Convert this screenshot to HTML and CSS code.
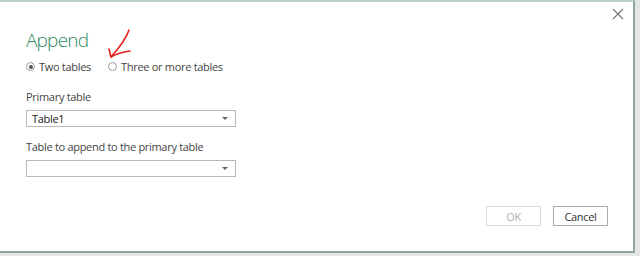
FILE: index.html
```html
<!DOCTYPE html>
<html>
    <head>
        <link rel="stylesheet" href="styles.css">
    </head>
    <body>
        <div class="dialog">
            <button type="button" class="close" aria-label="Close">
                <svg width="12" height="12" viewBox="0 0 12 12">
                    <path d="M1 1 L11 11 M11 1 L1 11" stroke="#777" stroke-width="1.1" fill="none"/>
                </svg>
            </button>

            <h1 class="title">Append</h1>

            <div class="choice">
                <label class="radio">
                    <span class="dot checked"></span>
                    Two tables
                </label>
                <label class="radio">
                    <span class="dot"></span>
                    Three or more tables
                </label>
            </div>

            <div class="field">
                <span class="label">Primary table</span>
                <div class="select">
                    <span>Table1</span>
                    <span class="caret"></span>
                </div>
            </div>

            <div class="field">
                <span class="label">Table to append to the primary table</span>
                <div class="select">
                    <span></span>
                    <span class="caret"></span>
                </div>
            </div>

            <div class="footer">
                <button type="button" class="btn" disabled>OK</button>
                <button type="button" class="btn">Cancel</button>
            </div>

            <!-- hand drawn annotation -->
            <svg class="mark" width="40" height="40" viewBox="0 0 40 40">
                <path d="M29 3 C26 12 19 21 11 30" stroke="#e8201c" stroke-width="1.6" fill="none" stroke-linecap="round"/>
                <path d="M9 22 C10 25 10 27 11 30 C16 27 22 25 30 24" stroke="#e8201c" stroke-width="1.6" fill="none" stroke-linecap="round" stroke-linejoin="round"/>
            </svg>
        </div>
    </body>
</html>
```

FILE: styles.css
```css
* {
    box-sizing: border-box;
}

body {
    margin: 0;
    width: 640px;
    height: 256px;
    background-color: #e4e6e5;
    font-family: "Open Sans", "Noto Sans", sans-serif;
    font-size: 11px;
    letter-spacing: -0.3px;
    color: #333;
}

/* DIALOG */
.dialog {
    position: relative;
    display: flex;
    flex-flow: column;
    width: 635px;
    height: 253px;
    padding: 25px 0 0 26px;
    background-color: white;
    border-top: 2px solid #b9cfc3;
    border-right: 2px solid #8fa99c;
    border-bottom: 2px solid #8fa99c;
}

.close {
    position: absolute;
    top: 6px;
    right: 9px;
    padding: 0;
    border: none;
    background: none;
}

.title {
    margin: 0;
    font-size: 19px;
    font-weight: 300;
    color: #2f8a5f;
    line-height: 26px;
    letter-spacing: -0.8px;
}

.choice {
    display: flex;
    flex-flow: row nowrap;
    gap: 17px;
    margin-top: 6px;
}

.radio {
    display: flex;
    align-items: center;
    gap: 4px;
    color: #444;
}

.dot {
    width: 9px;
    height: 9px;
    border: 1px solid #999;
    border-radius: 50%;
    position: relative;
}

.dot.checked::after {
    content: "";
    position: absolute;
    top: 1.5px;
    left: 1.5px;
    width: 4px;
    height: 4px;
    border-radius: 50%;
    background-color: #555;
}

.field {
    display: flex;
    flex-flow: column;
    margin-top: 15px;
}

.field + .field {
    margin-top: 12px;
}

.label {
    color: #444;
    margin-bottom: 6px;
}

.select {
    display: flex;
    justify-content: space-between;
    align-items: center;
    width: 210px;
    height: 17px;
    padding: 0 7px 0 5px;
    border: 1px solid #b8b8b8;
    color: #222;
}

.caret {
    width: 0;
    height: 0;
    border-left: 3px solid transparent;
    border-right: 3px solid transparent;
    border-top: 3px solid #666;
}

.footer {
    display: flex;
    justify-content: flex-end;
    gap: 12px;
    margin-top: auto;
    padding: 0 25px 25px 0;
}

.btn {
    width: 55px;
    height: 20px;
    padding: 0;
    border: 1px solid #acacac;
    background-color: white;
    font-family: inherit;
    font-size: 11px;
    letter-spacing: -0.3px;
    color: #333;
}

.btn:disabled {
    border-color: #dadada;
    color: #b0b0b0;
}

.mark {
    position: absolute;
    top: 25px;
    left: 100px;
}
```
